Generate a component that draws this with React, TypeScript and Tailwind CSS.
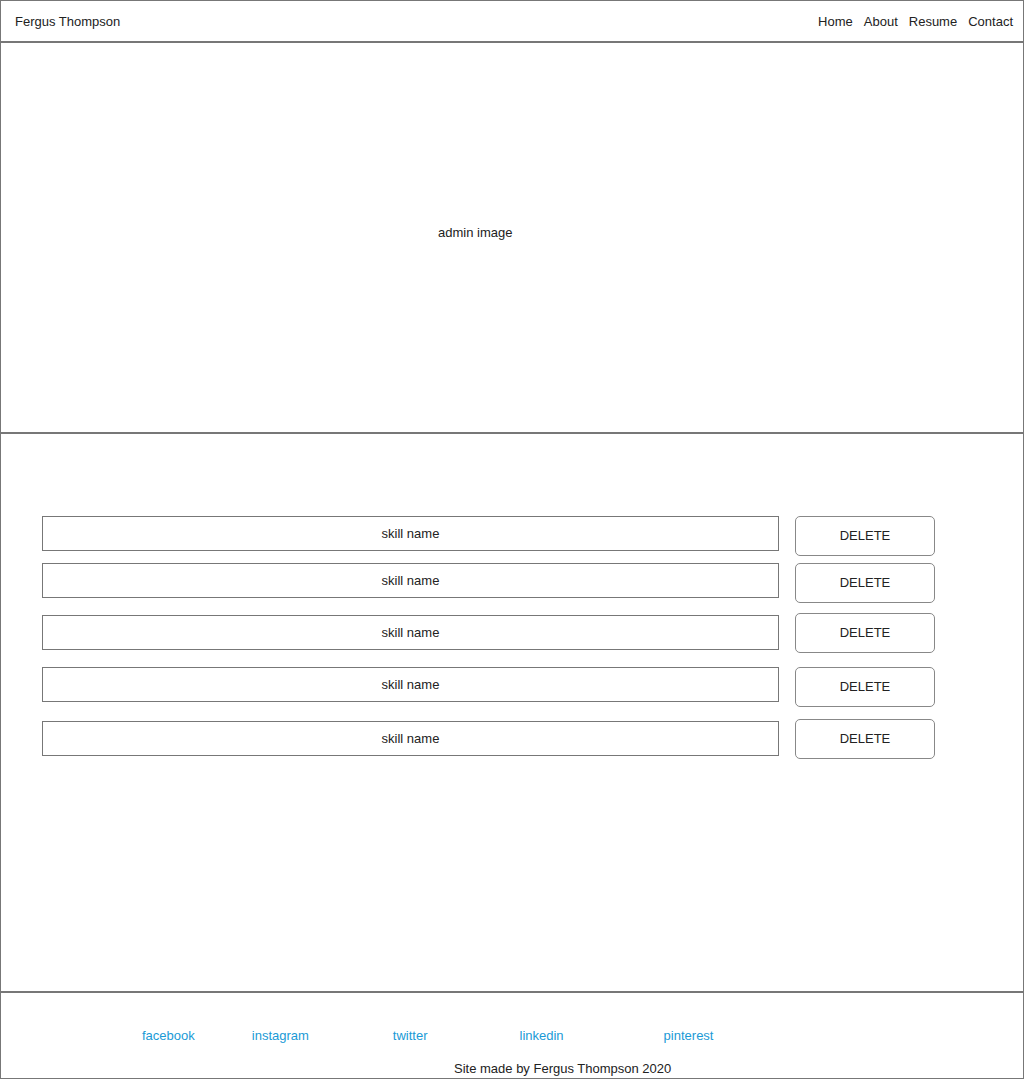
const skills = [
  { rowMt: 'mt-0', boxMt: 'mt-0' },
  { rowMt: 'mt-[7px]', boxMt: 'mt-0' },
  { rowMt: 'mt-[10px]', boxMt: 'mt-[2px]' },
  { rowMt: 'mt-[14px]', boxMt: 'mt-0' },
  { rowMt: 'mt-[12px]', boxMt: 'mt-[2px]' },
];

export default function App() {
  return (
    <div className="w-[1024px] h-[1079px] border border-[#777] flex flex-col bg-white text-[#222] font-['Liberation_Sans',Arial,sans-serif]">
      <header className="h-[42px] shrink-0 border-b-2 border-[#777] flex items-center justify-between pl-[14px] pr-[10px] pt-[2px] text-[13px]">
        <span>Fergus Thompson</span>
        <nav className="flex gap-[11px]">
          <a>Home</a>
          <a>About</a>
          <a>Resume</a>
          <a>Contact</a>
        </nav>
      </header>

      <section className="h-[391px] shrink-0 border-b-2 border-[#777] flex items-center pl-[437px] text-[13px]">
        <span className="-mt-[10px]">admin image</span>
      </section>

      <section className="h-[559px] shrink-0 border-b-2 border-[#777] pt-[82px] pl-[41px]">
        {skills.map((s, i) => (
          <div key={i} className={`flex items-start gap-[16px] ${s.rowMt}`}>
            <div className={`w-[737px] h-[35px] border border-[#777] flex items-center justify-center text-[13px] ${s.boxMt}`}>
              skill name
            </div>
            <button className="w-[140px] h-[40px] border border-[#888] rounded-[5px] text-[13px] text-[#222] pb-[1px]">
              DELETE
            </button>
          </div>
        ))}
      </section>

      <footer className="flex-1 flex flex-col text-[13px]">
        <div className="flex pt-[33px] text-[#1a9ad6]">
          <a className="ml-[141px]">facebook</a>
          <a className="ml-[57px]">instagram</a>
          <a className="ml-[84px]">twitter</a>
          <a className="ml-[92px]">linkedin</a>
          <a className="ml-[100px]">pinterest</a>
        </div>
        <div className="pl-[453px] mt-[13px]">Site made by Fergus Thompson 2020</div>
      </footer>
    </div>
  );
}
